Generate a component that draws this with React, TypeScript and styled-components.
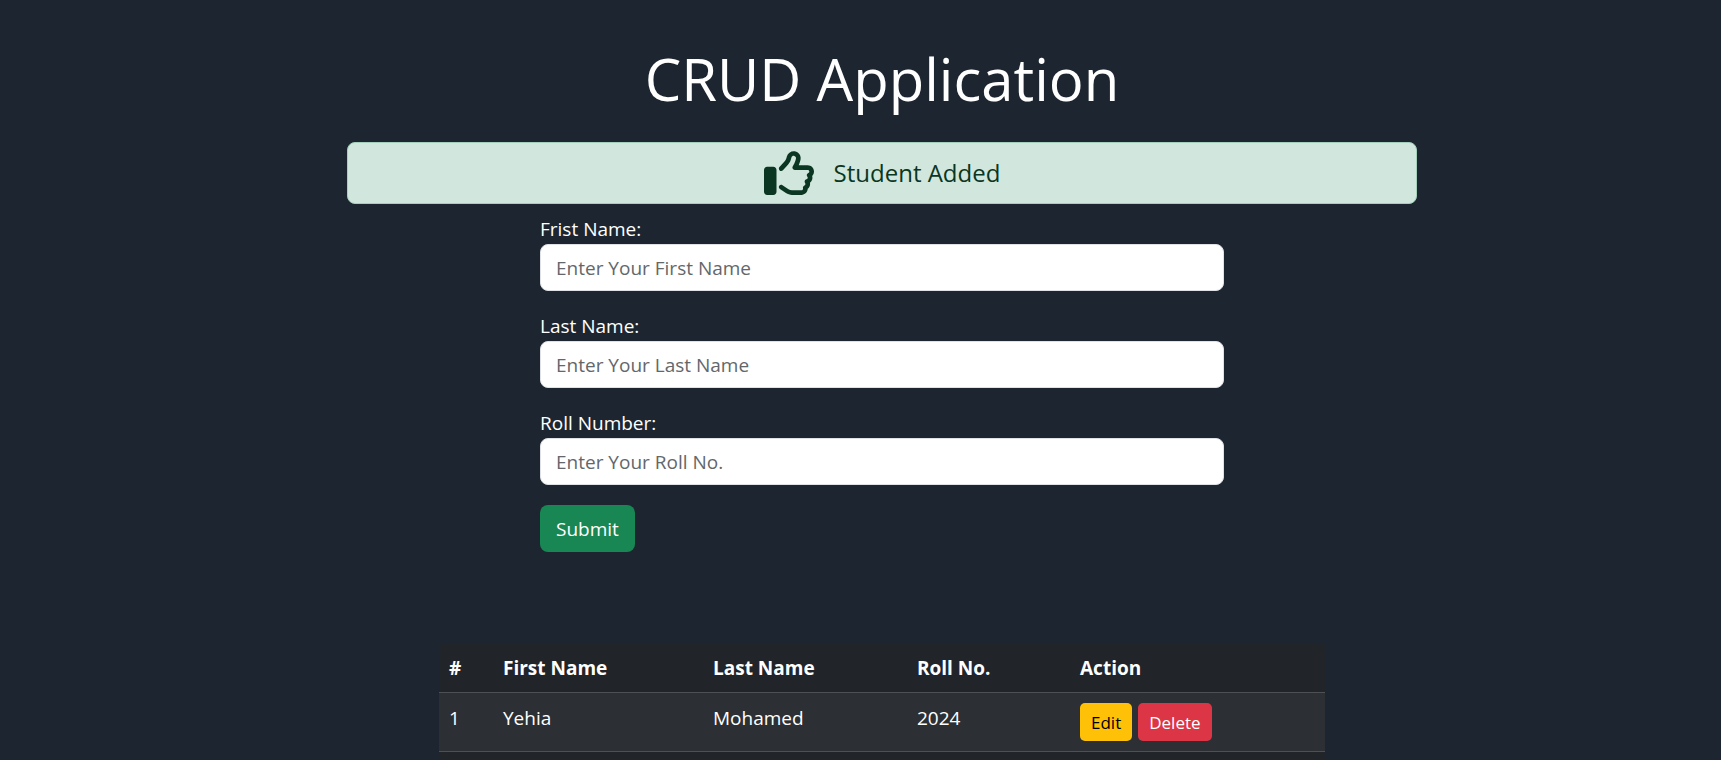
import React from "react";
import styled, { createGlobalStyle } from "styled-components";
import { FaRegThumbsUp } from "react-icons/fa6";

const GlobalStyle = createGlobalStyle`
  *, *::before, *::after { box-sizing: border-box; }
  html { background: #1d2630; }
  body {
    margin: 0;
    background: #1d2630;
    color: #fff;
    font-family: "Segoe UI", "Open Sans", "Noto Sans", sans-serif;
    font-size: 19px;
    line-height: 30px;
  }
`;

const Page = styled.main`
  display: flex;
  flex-direction: column;
  align-items: center;
  height: 100vh;
  overflow: hidden;
  padding: 43px 0 0 43px;
`;

const Title = styled.h1`
  margin: 0;
  font-size: 58px;
  font-weight: 400;
  line-height: 72px;
`;

const Alert = styled.div`
  display: flex;
  align-items: center;
  justify-content: center;
  gap: 20px;
  flex-shrink: 0;
  width: 1070px;
  max-width: 100%;
  height: 62px;
  margin-top: 27px;
  border: 1px solid #a3cfbb;
  border-radius: 8px;
  background: #d1e7dd;
  color: #0a3622;
  font-size: 24px;
`;

const Form = styled.form`
  display: flex;
  flex-direction: column;
  align-items: flex-start;
  gap: 20px;
  flex-shrink: 0;
  width: 684px;
  max-width: 100%;
  margin-top: 10px;
`;

const Field = styled.div`
  display: flex;
  flex-direction: column;
  width: 100%;
`;

const Label = styled.label`
  height: 30px;
`;

const Input = styled.input`
  width: 100%;
  height: 47px;
  padding: 8px 15px;
  border: 1px solid #dee2e6;
  border-radius: 8px;
  background: #fff;
  color: #212529;
  font: inherit;
  &::placeholder { color: #63676b; opacity: 1; }
`;

const Button = styled.button<{ $bg: string; $fg?: string; $small?: boolean }>`
  height: ${(p) => (p.$small ? 38 : 47)}px;
  padding: 0 ${(p) => (p.$small ? 11 : 16)}px;
  border: 0;
  border-radius: ${(p) => (p.$small ? 5 : 8)}px;
  background: ${(p) => p.$bg};
  color: ${(p) => p.$fg ?? "#fff"};
  font-family: inherit;
  font-size: ${(p) => (p.$small ? 17 : 19)}px;
  cursor: pointer;
`;

const TablePanel = styled.section`
  flex-shrink: 0;
  width: 886px;
  max-width: 100%;
  margin-top: 92px;
  padding-bottom: 24px;
  background: #212529;
`;

const Table = styled.table`
  width: 100%;
  border-collapse: collapse;
  table-layout: fixed;
`;

const Col = styled.col<{ $width?: number }>`
  width: ${(p) => (p.$width ? `${p.$width}px` : "auto")};
`;

const HeadCell = styled.th`
  padding: 9px 10px;
  border-bottom: 1px solid #4d5154;
  font-weight: 700;
  text-align: left;
`;

const Cell = styled.td`
  padding: 10px;
  border-bottom: 1px solid #4d5154;
  background: #2c3034;
  vertical-align: top;
`;

const Actions = styled.div`
  display: flex;
  gap: 6px;
`;

const fields = [
  { id: "first-name", label: "Frist Name:", placeholder: "Enter Your First Name" },
  { id: "last-name", label: "Last Name:", placeholder: "Enter Your Last Name" },
  { id: "roll-number", label: "Roll Number:", placeholder: "Enter Your Roll No." },
];

const columns = [
  { title: "#", width: 54 },
  { title: "First Name", width: 210 },
  { title: "Last Name", width: 204 },
  { title: "Roll No.", width: 163 },
  { title: "Action" },
];

const students = [{ first: "Yehia", last: "Mohamed", roll: "2024" }];

export default function App() {
  return (
    <>
      <GlobalStyle />
      <Page>
        <Title>CRUD Application</Title>
        <Alert role="alert">
          <FaRegThumbsUp size={50} aria-hidden />
          <span>Student Added</span>
        </Alert>
        <Form onSubmit={(e) => e.preventDefault()}>
          {fields.map((f) => (
            <Field key={f.id}>
              <Label htmlFor={f.id}>{f.label}</Label>
              <Input id={f.id} type="text" placeholder={f.placeholder} />
            </Field>
          ))}
          <Button type="submit" $bg="#198754">Submit</Button>
        </Form>
        <TablePanel>
          <Table>
            <colgroup>
              {columns.map((c) => (
                <Col key={c.title} $width={c.width} />
              ))}
            </colgroup>
            <thead>
              <tr>
                {columns.map((c) => (
                  <HeadCell key={c.title} scope="col">{c.title}</HeadCell>
                ))}
              </tr>
            </thead>
            <tbody>
              {students.map((s, i) => (
                <tr key={s.roll}>
                  <Cell>{i + 1}</Cell>
                  <Cell>{s.first}</Cell>
                  <Cell>{s.last}</Cell>
                  <Cell>{s.roll}</Cell>
                  <Cell>
                    <Actions>
                      <Button type="button" $small $bg="#ffc107" $fg="#000">Edit</Button>
                      <Button type="button" $small $bg="#dc3545">Delete</Button>
                    </Actions>
                  </Cell>
                </tr>
              ))}
            </tbody>
          </Table>
        </TablePanel>
      </Page>
    </>
  );
}
